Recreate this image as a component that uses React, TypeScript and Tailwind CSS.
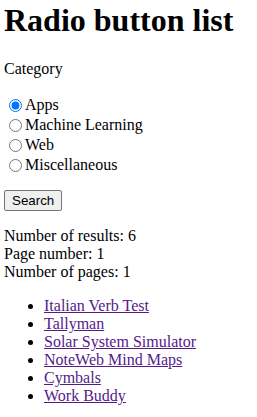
import React from "react";

const cats = ["Apps", "Machine Learning", "Web", "Miscellaneous"];
const items = [
  "Italian Verb Test",
  "Tallyman",
  "Solar System Simulator",
  "NoteWeb Mind Maps",
  "Cymbals",
  "Work Buddy",
];

export default function App() {
  return (
    <div className="bg-white text-black px-[4px] pt-[2px] text-[16px] leading-[18px] font-['Liberation_Serif',serif] min-h-[417px]">
      <h1 className="text-[32px] leading-[36.8px] font-bold m-0 mb-[21.4px]">Radio button list</h1>
      <div className="mb-[17px]">Category</div>
      <div className="flex flex-col">
        {cats.map((c, i) => (
          <label key={c} className="flex items-center h-[20px]">
            <input
              type="radio"
              name="cat"
              defaultChecked={i === 0}
              className="w-[13px] h-[13px] ml-[5px] mr-[3px] m-0 accent-[#0075ff]"
            />
            <span>{c}</span>
          </label>
        ))}
      </div>
      <div className="mt-[15px] flex">
        <button className="h-[21px] px-[7px] border border-[#767676] rounded-[2px] bg-[#efefef] text-[13.33px] leading-[15px] font-['Liberation_Sans',Arial,sans-serif]">
          Search
        </button>
      </div>
      <div className="mt-[16px]">
        <div>Number of results: 6</div>
        <div>Page number: 1</div>
        <div>Number of pages: 1</div>
      </div>
      <ul className="mt-[16px] pl-[40px] list-disc">
        {items.map((t) => (
          <li key={t}>
            <a href="#" className="text-[#551a8b] underline">{t}</a>
          </li>
        ))}
      </ul>
    </div>
  );
}
